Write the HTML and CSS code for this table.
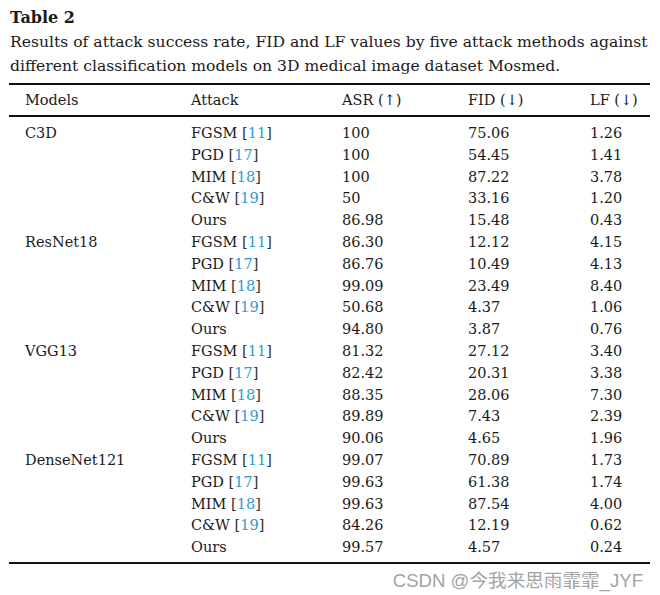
FILE: index.html
```html
<!DOCTYPE html>
<html>
<head>
<meta charset="utf-8">
<link rel="stylesheet" href="styles.css">
</head>
<body>
<div class="page">
  <div class="title">Table 2</div>
  <div class="caption">Results of attack success rate, FID and LF values by five attack methods against<br>different classification models on 3D medical image dataset Mosmed.</div>
  <table class="tbl">
    <colgroup>
      <col class="c1"><col class="c2"><col class="c3"><col class="c4"><col class="c5">
    </colgroup>
    <thead>
      <tr><th>Models</th><th>Attack</th><th>ASR (↑)</th><th>FID (↓)</th><th>LF (↓)</th></tr>
    </thead>
    <tbody>
      <tr class="first"><td>C3D</td><td>FGSM <span class="br">[</span><span class="ref">11</span><span class="br">]</span></td><td>100</td><td>75.06</td><td>1.26</td></tr>
      <tr><td></td><td>PGD <span class="br">[</span><span class="ref">17</span><span class="br">]</span></td><td>100</td><td>54.45</td><td>1.41</td></tr>
      <tr><td></td><td>MIM <span class="br">[</span><span class="ref">18</span><span class="br">]</span></td><td>100</td><td>87.22</td><td>3.78</td></tr>
      <tr><td></td><td>C&amp;W <span class="br">[</span><span class="ref">19</span><span class="br">]</span></td><td>50</td><td>33.16</td><td>1.20</td></tr>
      <tr><td></td><td>Ours</td><td>86.98</td><td>15.48</td><td>0.43</td></tr>
      <tr><td>ResNet18</td><td>FGSM <span class="br">[</span><span class="ref">11</span><span class="br">]</span></td><td>86.30</td><td>12.12</td><td>4.15</td></tr>
      <tr><td></td><td>PGD <span class="br">[</span><span class="ref">17</span><span class="br">]</span></td><td>86.76</td><td>10.49</td><td>4.13</td></tr>
      <tr><td></td><td>MIM <span class="br">[</span><span class="ref">18</span><span class="br">]</span></td><td>99.09</td><td>23.49</td><td>8.40</td></tr>
      <tr><td></td><td>C&amp;W <span class="br">[</span><span class="ref">19</span><span class="br">]</span></td><td>50.68</td><td>4.37</td><td>1.06</td></tr>
      <tr><td></td><td>Ours</td><td>94.80</td><td>3.87</td><td>0.76</td></tr>
      <tr><td>VGG13</td><td>FGSM <span class="br">[</span><span class="ref">11</span><span class="br">]</span></td><td>81.32</td><td>27.12</td><td>3.40</td></tr>
      <tr><td></td><td>PGD <span class="br">[</span><span class="ref">17</span><span class="br">]</span></td><td>82.42</td><td>20.31</td><td>3.38</td></tr>
      <tr><td></td><td>MIM <span class="br">[</span><span class="ref">18</span><span class="br">]</span></td><td>88.35</td><td>28.06</td><td>7.30</td></tr>
      <tr><td></td><td>C&amp;W <span class="br">[</span><span class="ref">19</span><span class="br">]</span></td><td>89.89</td><td>7.43</td><td>2.39</td></tr>
      <tr><td></td><td>Ours</td><td>90.06</td><td>4.65</td><td>1.96</td></tr>
      <tr><td>DenseNet121</td><td>FGSM <span class="br">[</span><span class="ref">11</span><span class="br">]</span></td><td>99.07</td><td>70.89</td><td>1.73</td></tr>
      <tr><td></td><td>PGD <span class="br">[</span><span class="ref">17</span><span class="br">]</span></td><td>99.63</td><td>61.38</td><td>1.74</td></tr>
      <tr><td></td><td>MIM <span class="br">[</span><span class="ref">18</span><span class="br">]</span></td><td>99.63</td><td>87.54</td><td>4.00</td></tr>
      <tr><td></td><td>C&amp;W <span class="br">[</span><span class="ref">19</span><span class="br">]</span></td><td>84.26</td><td>12.19</td><td>0.62</td></tr>
      <tr class="last"><td></td><td>Ours</td><td>99.57</td><td>4.57</td><td>0.24</td></tr>
    </tbody>
  </table>
  <div class="watermark">CSDN @今我来思雨霏霏_JYF</div>
</div>
</body>
</html>
```
FILE: styles.css
```css
html, body {
  margin: 0;
  padding: 0;
  background: #ffffff;
}
.page {
  width: 660px;
  height: 595px;
  overflow: hidden;
  padding: 6px 10px 0 9px;
  box-sizing: border-box;
  font-family: "DejaVu Serif", "Liberation Serif", serif;
  color: #1a1a1a;
}
.title {
  font-weight: bold;
  font-size: 16px;
  line-height: 24px;
  padding-left: 1px;
}
.caption {
  font-size: 15.6px;
  line-height: 24px;
  padding-left: 1px;
  margin-bottom: 5px;
  white-space: nowrap;
}
.tbl {
  width: 641px;
  border-collapse: collapse;
  table-layout: fixed;
  font-size: 14.5px;
}
.c1 { width: 166px; }
.c2 { width: 151px; }
.c3 { width: 126px; }
.c4 { width: 122px; }
.c5 { width: 76px; }
.tbl thead tr {
  border-top: 2px solid #111;
  border-bottom: 2px solid #111;
}
.tbl th {
  font-weight: normal;
  text-align: left;
  padding: 0 0 0 16px;
  height: 30px;
  line-height: 30px;
}
.tbl td {
  padding: 0 0 0 16px;
  height: 21.8px;
  line-height: 21.8px;
  white-space: nowrap;
}
.tbl tr.first td { padding-top: 6px; }
.tbl tr.last td { padding-bottom: 3px; }
.tbl tbody { border-bottom: 2px solid #111; }
.br { color: #333; }
.ref { color: #2a9ad6; }
.watermark {
  text-align: right;
  font-family: "Liberation Sans", "Noto Sans CJK SC", sans-serif;
  font-size: 18.6px;
  color: #a3a3a3;
  padding-right: 7px;
  margin-top: 1px;
}
```
